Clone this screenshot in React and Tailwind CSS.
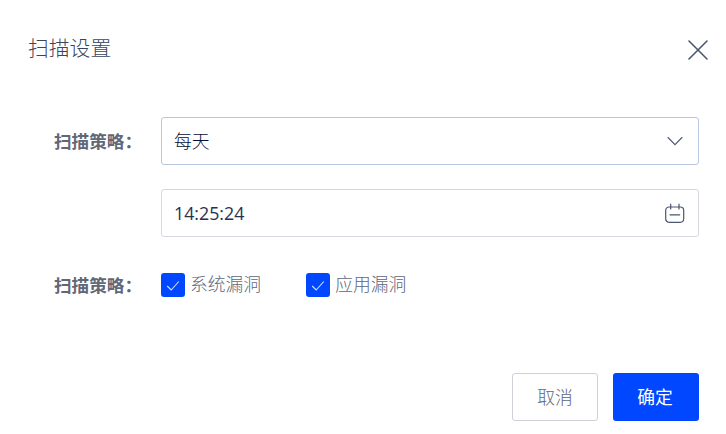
import React, { useState } from "react";

const CloseIcon = () => (
  <svg width="20" height="20" viewBox="0 0 20 20" fill="none" stroke="#4a5770" strokeWidth="1.6" strokeLinecap="round">
    <path d="M1 1L19 19M19 1L1 19" />
  </svg>
);

const ChevronIcon = () => (
  <svg width="16" height="10" viewBox="0 0 16 10" fill="none" stroke="#4a5770" strokeWidth="1.1" strokeLinecap="round">
    <path d="M1 1.5L8 8.7L15 1.5" />
  </svg>
);

const CalendarIcon = () => (
  <svg width="20" height="20" viewBox="0 0 20 20" fill="none" stroke="#4a5770" strokeWidth="1.2" strokeLinecap="round">
    <rect x="0.7" y="4" width="18" height="15.3" rx="3.5" />
    <path d="M5.7 1.2V6M14 1.2V6M5 11.8H14.7" />
  </svg>
);

function Checkbox({ label, checked, onChange }) {
  return (
    <button type="button" role="checkbox" aria-checked={checked} onClick={onChange} className="flex items-center">
      <span
        className={`flex h-6 w-6 items-center justify-center rounded-[3px] ${
          checked ? "bg-[#0047ff]" : "border border-[#d5d8de] bg-white"
        }`}
      >
        {checked && (
          <svg width="14" height="12" viewBox="0 0 14 12" fill="none" stroke="#d5e0ff" strokeWidth="1.1">
            <path d="M1.2 7L5.2 11L12.8 2.5" />
          </svg>
        )}
      </span>
      <span className="-mt-0.5 ml-[5px] text-[17.8px] font-light leading-6 text-[#5c677c]">{label}</span>
    </button>
  );
}

function Row({ label, children }) {
  return (
    <div className="flex items-center">
      <div className="-mt-px w-[107px] shrink-0 whitespace-nowrap text-[17.6px] font-bold leading-6 text-[#606777]">
        {label}
      </div>
      {children}
    </div>
  );
}

export default function App() {
  const [options, setOptions] = useState({ system: true, app: true });

  const toggle = (key) => setOptions({ ...options, [key]: !options[key] });

  return (
    <div className="h-[434px] w-[726px] overflow-hidden bg-white font-['Open_Sans','Noto_Sans_CJK_SC',sans-serif]">
      <div className="flex h-[63px] items-start justify-between pl-7 pr-[18px] pt-[34px]">
        <h2 className="text-[20.8px] font-light leading-[28px] text-[#3a455d]">扫描设置</h2>
        <button type="button" className="pt-1.5">
          <CloseIcon />
        </button>
      </div>

      <div className="flex flex-col pl-[54px] pr-[27px] pt-[54px]">
        <Row label="扫描策略：">
          <button
            type="button"
            className="flex h-12 flex-1 items-center justify-between rounded-[3px] border border-[#b9c6e2] pl-3 pr-[15px] text-[17.8px] font-light text-[#030f35]"
          >
            <span>每天</span>
            <ChevronIcon />
          </button>
        </Row>

        <div className="mt-6 flex pl-[107px]">
          <button
            type="button"
            className="flex h-12 flex-1 items-center justify-between rounded-[3px] border border-[#d5d8de] pl-3 pr-[13px] text-[17.8px] text-[#27324f]"
          >
            <span>14:25:24</span>
            <CalendarIcon />
          </button>
        </div>

        <div className="mt-9">
          <Row label="扫描策略：">
            <div className="flex gap-[45px]">
              <Checkbox label="系统漏洞" checked={options.system} onChange={() => toggle("system")} />
              <Checkbox label="应用漏洞" checked={options.app} onChange={() => toggle("app")} />
            </div>
          </Row>
        </div>
      </div>

      <div className="mt-[76px] flex justify-end gap-[15px] pr-[27px] text-[17.8px]">
        <button type="button" className="h-12 w-[86px] rounded-[3px] border border-[#cdd0d8] font-light text-[#5c677c]">
          取消
        </button>
        <button type="button" className="h-12 w-[86px] rounded-[3px] bg-[#0047ff] pr-0.5 font-normal text-white">
          确定
        </button>
      </div>
    </div>
  );
}
